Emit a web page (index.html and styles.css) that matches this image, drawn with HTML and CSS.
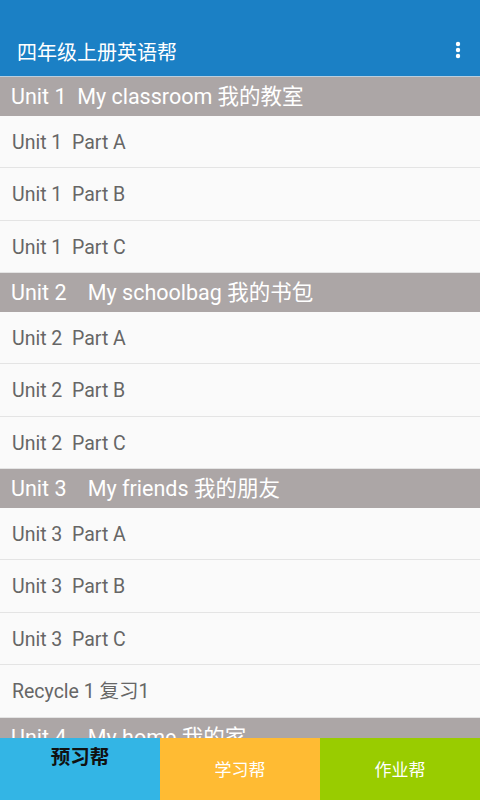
FILE: index.html
```html
<!DOCTYPE html>
<html lang="zh-CN">
<head>
  <meta charset="UTF-8" />
  <meta name="viewport" content="width=device-width, initial-scale=1.0" />
  <title>四年级上册英语帮</title>
  <link rel="stylesheet" href="styles.css">
</head>
<body>

  <div class="status-bar"></div>
  <div class="app-bar">
    <h1>四年级上册英语帮</h1>
    <svg class="menu" width="6" height="18" viewBox="0 0 6 18">
      <circle cx="3" cy="3" r="2.2" fill="#fff" />
      <circle cx="3" cy="9" r="2.2" fill="#fff" />
      <circle cx="3" cy="15" r="2.2" fill="#fff" />
    </svg>
  </div>

  <div class="list">
    <div class="section">Unit 1  My classroom 我的教室</div>
    <div class="row">Unit 1  Part A</div>
    <div class="row">Unit 1  Part B</div>
    <div class="row">Unit 1  Part C</div>

    <div class="section">Unit 2    My schoolbag 我的书包</div>
    <div class="row">Unit 2  Part A</div>
    <div class="row">Unit 2  Part B</div>
    <div class="row">Unit 2  Part C</div>

    <div class="section">Unit 3    My friends 我的朋友</div>
    <div class="row">Unit 3  Part A</div>
    <div class="row">Unit 3  Part B</div>
    <div class="row">Unit 3  Part C</div>
    <div class="row">Recycle 1 复习1</div>

    <div class="section">Unit 4    My home 我的家</div>
    <div class="row">Unit 4  Part A</div>
  </div>

  <div class="tabs">
    <div class="tab tab-preview">预习帮</div>
    <div class="tab tab-study">学习帮</div>
    <div class="tab tab-homework">作业帮</div>
  </div>

</body>
</html>
```

FILE: styles.css
```css
body {
  font-family: Roboto, "Noto Sans CJK SC", sans-serif;
  margin: 0;
  padding: 0;
  background: #fafafa;
  overflow: hidden;
  height: 800px;
}
.status-bar {
  height: 26px;
  background: #1b80c5;
}
.app-bar {
  height: 50px;
  background: #1b80c5;
  display: flex;
  align-items: center;
  justify-content: space-between;
  padding: 0 19px 0 17px;
  border-bottom: 1px solid #b9cfe0;
}
.app-bar h1 {
  margin: 0;
  color: #fff;
  font-size: 20px;
  font-weight: normal;
  padding-top: 1px;
}
.menu {
  display: block;
  margin-top: -3px;
}
.list {
  background: #fafafa;
}
.section {
  height: 38.5px;
  line-height: 39px;
  background: #aca6a6;
  color: #fff;
  font-size: 21.5px;
  padding-left: 11px;
  white-space: pre;
}
.row {
  height: 51.5px;
  line-height: 53px;
  border-bottom: 1px solid #e4e4e4;
  color: #666;
  font-size: 19.5px;
  padding-left: 12px;
  white-space: pre;
}
.row:last-of-type {
  border-bottom: none;
}
.tabs {
  position: fixed;
  left: 0;
  right: 0;
  bottom: 0;
  height: 62px;
  display: flex;
}
.tab {
  flex: 1;
  text-align: center;
  color: #fff;
  font-size: 17px;
  line-height: 64px;
}
.tab-preview {
  background: #33b5e5;
  color: #111;
  font-size: 19.5px;
  font-weight: bold;
  line-height: 40px;
}
.tab-study {
  background: #ffbb33;
}
.tab-homework {
  background: #99cc00;
}
```
